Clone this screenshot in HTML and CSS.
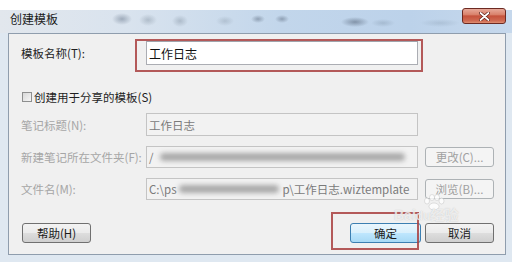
FILE: index.html
```html
<!DOCTYPE html>
<html lang="zh-CN">
<head>
    <meta charset="UTF-8">
    <title>创建模板</title>
    <link rel="stylesheet" href="styles.css">
</head>
<body>
    <div class="window">
        <div class="titlebar">
            <span class="title">创建模板</span>
            <span class="close">
                <svg width="11" height="9" viewBox="0 0 11 9">
                    <path d="M1.5 1 L9.5 8 M9.5 1 L1.5 8" stroke="#5a1c14" stroke-width="3.2" stroke-linecap="round"/>
                    <path d="M1.5 1 L9.5 8 M9.5 1 L1.5 8" stroke="#ffffff" stroke-width="1.8" stroke-linecap="round"/>
                </svg>
            </span>
        </div>

        <div class="frame">
            <div class="panel">
                <div class="row row-name">
                    <span class="label">模板名称(T):</span>
                    <div class="field">工作日志</div>
                </div>

                <div class="row row-check">
                    <span class="checkbox"></span>
                    <span class="label">创建用于分享的模板(S)</span>
                </div>

                <div class="row row-title">
                    <span class="label disabled">笔记标题(N):</span>
                    <div class="field disabled">工作日志</div>
                </div>

                <div class="row row-folder">
                    <span class="label disabled">新建笔记所在文件夹(F):</span>
                    <div class="field disabled">/<span class="smudge smudge-long"></span></div>
                    <button class="btn btn-side" disabled>更改(C)...</button>
                </div>

                <div class="row row-file">
                    <span class="label disabled">文件名(M):</span>
                    <div class="field disabled">C:\ps<span class="smudge smudge-short"></span>p\工作日志.wiztemplate</div>
                    <button class="btn btn-side" disabled>浏览(B)...</button>
                </div>

                <div class="footer">
                    <button class="btn btn-help">帮助(H)</button>
                    <button class="btn btn-ok">确定</button>
                    <button class="btn btn-cancel">取消</button>
                </div>
            </div>
        </div>

        <!-- annotation boxes and watermark from the screenshot -->
        <div class="mark mark-name"></div>
        <div class="mark mark-ok"></div>
        <svg class="paw" width="22" height="16" viewBox="0 0 22 16">
            <g fill="rgba(255,255,255,0.8)" stroke="rgba(160,160,160,0.5)" stroke-width="0.6">
                <ellipse cx="4" cy="7" rx="2.5" ry="3"/>
                <ellipse cx="9" cy="3.5" rx="2.5" ry="3"/>
                <ellipse cx="14" cy="3.5" rx="2.5" ry="3"/>
                <ellipse cx="18.5" cy="7" rx="2.5" ry="3"/>
                <ellipse cx="11" cy="12.5" rx="5" ry="3.5"/>
            </g>
        </svg>
        <div class="watermark">Bai<span class="wm-du">du</span>经验</div>
    </div>
</body>
</html>
```

FILE: styles.css
```css
body {
    margin: 0;
    background: #ffffff;
    font-family: "Noto Sans CJK SC", "Liberation Sans", sans-serif;
    font-size: 11.5px;
    color: #1e1e1e;
    overflow: hidden;
}

.window {
    position: relative;
    width: 512px;
    margin-top: 10px;
    background: #dfe8f1;
}

.titlebar {
    display: flex;
    align-items: flex-start;
    height: 23px;
    padding-left: 10px;
    background:
        radial-gradient(ellipse 10px 6px at 122px 9px, rgba(110,125,145,0.55), transparent),
        radial-gradient(ellipse 9px 6px at 148px 10px, rgba(120,135,150,0.4), transparent),
        radial-gradient(ellipse 8px 6px at 180px 11px, rgba(120,135,150,0.4), transparent),
        radial-gradient(ellipse 9px 5px at 225px 11px, rgba(130,145,160,0.35), transparent),
        radial-gradient(ellipse 7px 4px at 258px 9px, rgba(90,105,125,0.5), transparent),
        radial-gradient(ellipse 7px 4px at 282px 9px, rgba(90,105,125,0.5), transparent),
        radial-gradient(ellipse 14px 5px at 355px 12px, rgba(80,95,115,0.55), transparent),
        radial-gradient(ellipse 12px 4px at 383px 13px, rgba(120,140,160,0.35), transparent),
        radial-gradient(ellipse 20px 4px at 440px 13px, rgba(130,150,170,0.3), transparent),
        linear-gradient(to right, #e2e7ed 0%, #d9e3ee 25%, #c2d6eb 55%, #bcd2ea 80%, #c6d8ec 100%);
}

.title {
    margin-top: 1px;
    font-size: 12px;
    line-height: 16px;
    color: #1a1a1a;
}

.close {
    display: flex;
    align-items: center;
    justify-content: center;
    width: 42px;
    height: 14px;
    margin: -2px 6px 0 auto;
    border: 1px solid #6c2a22;
    border-radius: 3px;
    background: linear-gradient(#e7a99a 0%, #d9826c 40%, #c5523c 50%, #cf6a52 85%, #e08f72 100%);
}

.frame {
    padding: 0 6px 7px 8px;
}

.panel {
    box-sizing: border-box;
    width: 498px;
    height: 222px;
    padding: 7px 10px 0 12px;
    border: 1px solid #8f9dad;
    background: #f0f0f0;
}

.row {
    display: flex;
    align-items: center;
}

.row-name {
    height: 24px;
}

.row-check {
    height: 18px;
    margin-top: 23px;
}

.row-title {
    height: 23px;
    margin-top: 7px;
}

.row-folder,
.row-file {
    height: 22px;
    margin-top: 10px;
}

.label {
    width: 125px;
    white-space: nowrap;
}

.label.disabled {
    color: #a6a6a6;
}

.row-check .label {
    width: auto;
}

.checkbox {
    box-sizing: border-box;
    width: 10px;
    height: 10px;
    margin: 0 2px 0 1px;
    border: 1px solid #8e8f8f;
    background: linear-gradient(135deg, #d8d8d8, #f6f6f6);
}

.field {
    box-sizing: border-box;
    display: flex;
    align-items: center;
    width: 272px;
    height: 100%;
    padding-left: 2px;
    border: 1px solid #abadb3;
    border-top-color: #9fa4ac;
    background: #ffffff;
    font-size: 12px;
    color: #111111;
    white-space: nowrap;
    overflow: hidden;
}

.field.disabled {
    border-color: #c4c4c4;
    background: #f2f2f2;
    color: #7a7a7a;
    font-size: 11.5px;
}

.smudge {
    display: inline-block;
    height: 8px;
    border-radius: 5px;
    background: #9c9c9c;
    filter: blur(2.5px);
    opacity: 0.85;
}

.smudge-long {
    width: 245px;
    margin-left: 6px;
}

.smudge-short {
    width: 100px;
    margin: 0 4px 0 2px;
}

.btn {
    box-sizing: border-box;
    height: 20px;
    padding: 0;
    border: 1px solid #707070;
    border-radius: 3px;
    background: linear-gradient(#f3f3f3 0%, #ebebeb 48%, #dddddd 52%, #cfcfcf 100%);
    font-family: inherit;
    font-size: 11.5px;
    color: #1a1a1a;
}

.btn-side {
    width: 69px;
    margin-left: 7px;
}

.btn:disabled {
    border-color: #adb2b5;
    background: #f4f4f4;
    color: #a0a0a0;
}

.footer {
    display: flex;
    height: 20px;
    margin-top: 23px;
    padding: 0 1px;
}

.btn-help {
    width: 69px;
    height: 20px;
}

.btn-ok {
    width: 71px;
    margin-left: auto;
    border-color: #3c7fb1;
    background: linear-gradient(#eaf6fd 0%, #d9f0fc 48%, #bee6fd 52%, #a7d9f5 100%);
}

.btn-cancel {
    width: 69px;
    margin-left: 4px;
}

.mark {
    position: absolute;
    box-sizing: border-box;
    border: 2px solid rgba(168, 62, 62, 0.85);
}

.mark-name {
    left: 135px;
    top: 29px;
    width: 288px;
    height: 33px;
}

.mark-ok {
    left: 331px;
    top: 202px;
    width: 88px;
    height: 38px;
}

.paw {
    position: absolute;
    left: 423px;
    top: 184px;
}

.watermark {
    position: absolute;
    left: 394px;
    top: 198px;
    font-family: "Liberation Sans", "Noto Sans CJK SC", sans-serif;
    font-size: 14px;
    line-height: 14px;
    font-weight: bold;
    color: rgba(255, 255, 255, 0.7);
    text-shadow: 0 0 1px rgba(150, 150, 150, 0.55);
    white-space: nowrap;
}

.wm-du {
    font-size: 12px;
}
```
